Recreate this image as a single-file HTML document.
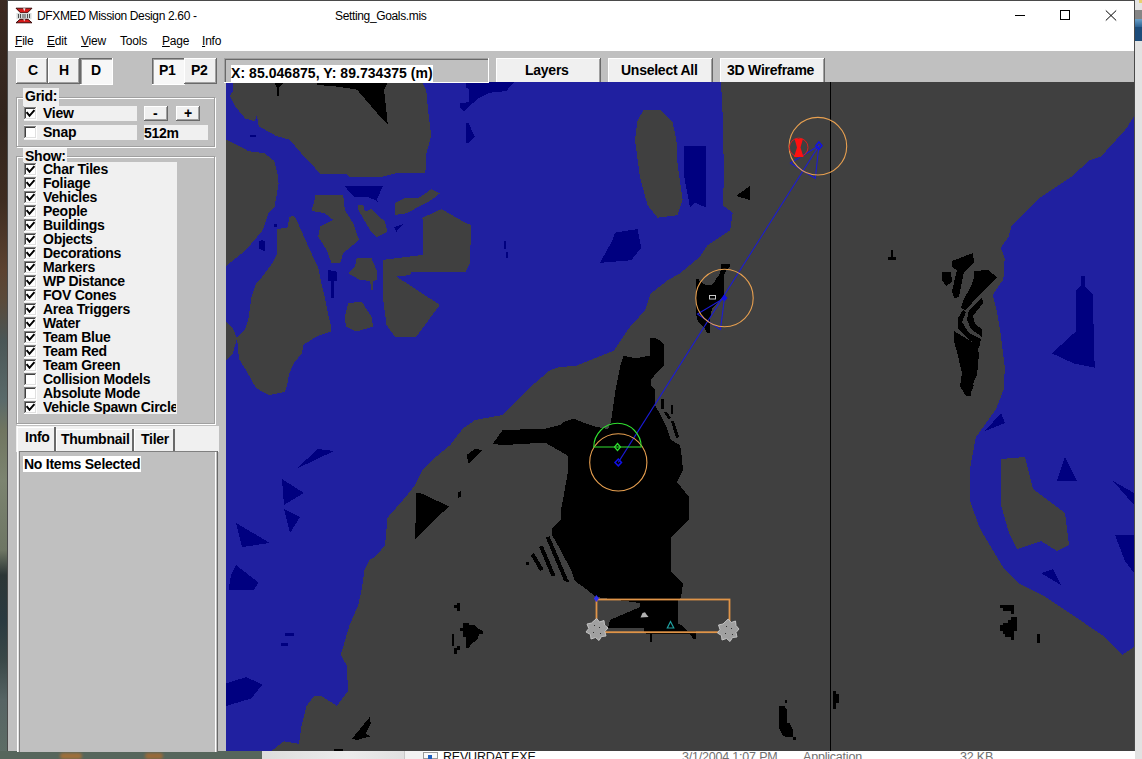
<!DOCTYPE html>
<html><head><meta charset="utf-8">
<style>
*{margin:0;padding:0;box-sizing:border-box}
html,body{width:1142px;height:759px;overflow:hidden;background:#3a2c22;position:relative;font-family:"Liberation Sans",sans-serif}
.a{position:absolute}
.t{position:absolute;white-space:pre;color:#000}
.ui{font-family:"Liberation Sans",sans-serif;font-weight:bold;font-size:14px;line-height:14px;letter-spacing:-0.25px}
.btn{position:absolute;background:#f0f0f0;border-top:1px solid #fff;border-left:1px solid #fff;border-right:1px solid #696969;border-bottom:1px solid #696969;box-shadow:inset -1px -1px 0 #a0a0a0}
.btnp{position:absolute;background:#f4f4f4;border-top:1px solid #696969;border-left:1px solid #696969;border-right:1px solid #fff;border-bottom:1px solid #fff;box-shadow:inset 1px 1px 0 #a0a0a0}
.cb{position:absolute;width:12px;height:12px;background:#fff;border-top:1px solid #808080;border-left:1px solid #808080;border-right:1px solid #f0f0f0;border-bottom:1px solid #f0f0f0;box-shadow:inset 1px 1px 0 #696969}
.lab{position:absolute;background:#f0f0f0}
u{text-decoration-thickness:1px;text-underline-offset:1px}
</style></head><body>
<!-- desktop left strip -->
<div class="a" style="left:0;top:0;width:8px;height:759px;background:linear-gradient(#3a2a22 0px,#32241c 120px,#3e2c20 200px,#5c4230 270px,#5a4a3a 300px,#4a5656 340px,#5a6a6a 400px,#707560 430px,#7c8470 480px,#6e7664 550px,#2c3636 575px,#2a3a40 620px,#3a4848 660px,#566464 700px,#5e6e66 759px)"></div>
<!-- bottom strip -->
<div class="a" style="left:0;top:751px;width:262px;height:8px;background:#56665c"></div>
<div class="a" style="left:262px;top:751px;width:142px;height:8px;background:linear-gradient(90deg,#dcdcdc,#ececec 60%,#e0e0e0)"></div>
<div class="a" style="left:60px;top:753px;width:22px;height:6px;background:#a0703a;border-radius:4px;filter:blur(1.5px)"></div>
<div class="a" style="left:145px;top:753px;width:18px;height:6px;background:#9a6a38;border-radius:4px;filter:blur(1.5px)"></div>
<div class="a" style="left:404px;top:751px;width:738px;height:8px;background:#fff"></div>
<div class="a" style="left:404px;top:751px;width:1px;height:8px;background:#c8c8c8"></div>
<div class="a" style="left:405px;top:751px;width:18px;height:8px;background:#f2f2f2"></div>
<div class="a" style="left:423px;top:752px;width:15px;height:7px;border:1px solid #9a9a9a;background:#fafafa"></div>
<div class="a" style="left:428px;top:755px;width:4px;height:4px;background:#2060c0"></div>
<div class="t" style="left:443px;top:750px;font-size:12.5px;letter-spacing:-0.2px;color:#101010">REVURDAT.EXE</div>
<div class="t" style="left:682px;top:750px;font-size:12.5px;letter-spacing:-0.2px;color:#707070">3/1/2004 1:07 PM</div>
<div class="t" style="left:803px;top:750px;font-size:12.5px;letter-spacing:-0.2px;color:#707070">Application</div>
<div class="t" style="left:960px;top:750px;font-size:12.5px;letter-spacing:-0.2px;color:#707070">32 KB</div>
<!-- right strip -->
<div class="a" style="left:1135px;top:0;width:7px;height:759px;background:#e4e4e4"></div>
<div class="a" style="left:1139px;top:0;width:3px;height:3px;background:#e8d070"></div>
<div class="a" style="left:1135px;top:10px;width:7px;height:9px;background:#858585"></div>
<div class="a" style="left:1135px;top:19px;width:7px;height:8px;background:linear-gradient(#6aa0c8,#2a6090)"></div>
<div class="a" style="left:1135px;top:27px;width:7px;height:14px;background:#1c4c7a"></div>
<div class="a" style="left:1135px;top:41px;width:7px;height:718px;background:#e2e2e2"></div>
<!-- window -->
<div class="a" style="left:7px;top:0;width:1128px;height:751px;background:#c0c0c0;border:1px solid #4a4a4a;border-bottom:none"></div>
<div class="a" style="left:8px;top:1px;width:1126px;height:50px;background:#fff"></div>
<svg class="a" style="left:15px;top:7px" width="18" height="17"><path d="M1 1.2H17L12.5 5.8H5.5Z" fill="#d41a1a" stroke="#2a0000" stroke-width="0.9"/><path d="M8 1.2L10.5 1.2L9.3 4.5Z" fill="#e8e8e8"/><rect x="1.5" y="6" width="15" height="6.2" fill="#d8dcdc"/><path d="M3.5 7v4M5.5 7v4M8 7v4M10 7v4M12.5 7v4M14.5 7v4" stroke="#505050" stroke-width="1"/><path d="M5 12.3H13L17 15.8H1Z" fill="#d41a1a" stroke="#2a0000" stroke-width="0.9"/><path d="M8.2 12.3L10.3 12.3L9.3 14.5Z" fill="#e8e8e8"/></svg>
<!-- title -->
<div class="t" style="left:37px;top:9px;font-size:12px;letter-spacing:-0.35px;color:#000">DFXMED Mission Design 2.60 -</div>
<div class="t" style="left:335px;top:9px;font-size:12px;letter-spacing:-0.35px;color:#000">Setting_Goals.mis</div>
<!-- window controls -->
<div class="a" style="left:1015px;top:15px;width:10px;height:1px;background:#000"></div>
<div class="a" style="left:1060px;top:10px;width:10px;height:10px;border:1px solid #000"></div>
<svg class="a" style="left:1104px;top:9px" width="14" height="13"><path d="M1.8 1.5L12.2 11.5M12.2 1.5L1.8 11.5" stroke="#000" stroke-width="1"/></svg>
<!-- menu -->
<div class="t" style="left:15px;top:34px;font-size:12px;letter-spacing:-0.2px"><u>F</u>ile</div>
<div class="t" style="left:47px;top:34px;font-size:12px;letter-spacing:-0.2px"><u>E</u>dit</div>
<div class="t" style="left:81px;top:34px;font-size:12px;letter-spacing:-0.2px"><u>V</u>iew</div>
<div class="t" style="left:120px;top:34px;font-size:12px;letter-spacing:-0.2px">Tools</div>
<div class="t" style="left:162px;top:34px;font-size:12px;letter-spacing:-0.2px"><u>P</u>age</div>
<div class="t" style="left:202px;top:34px;font-size:12px;letter-spacing:-0.2px"><u>I</u>nfo</div>

<!-- toolbar buttons -->
<div class="a" style="left:16px;top:58px;width:32px;height:26px;background:#696969"></div><div class="a" style="left:16px;top:58px;width:31px;height:25px;background:#fff"></div><div class="a" style="left:17px;top:59px;width:30px;height:24px;background:#a0a0a0"></div><div class="a" style="left:17px;top:59px;width:29px;height:23px;background:#f0f0f0"></div>
<div class="t ui" style="left:28px;top:63px;">C</div>
<div class="a" style="left:48px;top:58px;width:32px;height:26px;background:#696969"></div><div class="a" style="left:48px;top:58px;width:31px;height:25px;background:#fff"></div><div class="a" style="left:49px;top:59px;width:30px;height:24px;background:#a0a0a0"></div><div class="a" style="left:49px;top:59px;width:29px;height:23px;background:#f0f0f0"></div>
<div class="t ui" style="left:59px;top:63px;">H</div>
<div class="a" style="left:80px;top:58px;width:33px;height:27px;background:#fff"></div><div class="a" style="left:80px;top:58px;width:32px;height:26px;background:#696969"></div><div class="a" style="left:81px;top:59px;width:31px;height:25px;background:#a0a0a0"></div><div class="a" style="left:82px;top:60px;width:30px;height:24px;background:#f7f7f7"></div>
<div class="t ui" style="left:91px;top:63px;">D</div>
<div class="a" style="left:152px;top:58px;width:33px;height:27px;background:#fff"></div><div class="a" style="left:152px;top:58px;width:32px;height:26px;background:#696969"></div><div class="a" style="left:153px;top:59px;width:31px;height:25px;background:#a0a0a0"></div><div class="a" style="left:154px;top:60px;width:30px;height:24px;background:#f7f7f7"></div>
<div class="t ui" style="left:159px;top:63px;">P1</div>
<div class="a" style="left:184px;top:58px;width:33px;height:26px;background:#696969"></div><div class="a" style="left:184px;top:58px;width:32px;height:25px;background:#fff"></div><div class="a" style="left:185px;top:59px;width:31px;height:24px;background:#a0a0a0"></div><div class="a" style="left:185px;top:59px;width:30px;height:23px;background:#f0f0f0"></div>
<div class="t ui" style="left:191px;top:63px;">P2</div>
<div class="a" style="left:224px;top:58px;width:265px;height:25px;background:#fff"></div>
<div class="a" style="left:224px;top:58px;width:264px;height:24px;background:#a0a0a0"></div>
<div class="a" style="left:225px;top:59px;width:263px;height:23px;background:#696969"></div>
<div class="a" style="left:226px;top:60px;width:262px;height:22px;background:#c0c0c0"></div>
<div class="a" style="left:231px;top:65px;width:202px;height:17px;background:#fff"></div>
<div class="t ui" style="left:231px;top:66px;letter-spacing:0.05px">X: 85.046875, Y: 89.734375 (m)</div>
<div class="a" style="left:496px;top:58px;width:105px;height:26px;background:#696969"></div><div class="a" style="left:496px;top:58px;width:104px;height:25px;background:#fff"></div><div class="a" style="left:497px;top:59px;width:103px;height:24px;background:#a0a0a0"></div><div class="a" style="left:497px;top:59px;width:102px;height:23px;background:#f0f0f0"></div>
<div class="t ui" style="left:525px;top:63px;">Layers</div>
<div class="a" style="left:608px;top:58px;width:105px;height:26px;background:#696969"></div><div class="a" style="left:608px;top:58px;width:104px;height:25px;background:#fff"></div><div class="a" style="left:609px;top:59px;width:103px;height:24px;background:#a0a0a0"></div><div class="a" style="left:609px;top:59px;width:102px;height:23px;background:#f0f0f0"></div>
<div class="t ui" style="left:621px;top:63px;">Unselect All</div>
<div class="a" style="left:720px;top:58px;width:105px;height:26px;background:#696969"></div><div class="a" style="left:720px;top:58px;width:104px;height:25px;background:#fff"></div><div class="a" style="left:721px;top:59px;width:103px;height:24px;background:#a0a0a0"></div><div class="a" style="left:721px;top:59px;width:102px;height:23px;background:#f0f0f0"></div>
<div class="t ui" style="left:727px;top:63px;">3D Wireframe</div>
<!-- LEFT PANEL -->
<div class="a" style="left:17px;top:98px;width:199px;height:50px;border:1px solid #fff"></div><div class="a" style="left:16px;top:97px;width:199px;height:50px;border:1px solid #a0a0a0"></div>
<div class="a" style="left:23px;top:88px;width:36px;height:18px;background:#f0f0f0"></div>
<div class="t ui" style="left:25px;top:89px;">Grid:</div>
<div class="a" style="left:24px;top:106px;width:113px;height:15px;background:#f0f0f0"></div>
<div class="a" style="left:24px;top:107px;width:13px;height:13px;background:#fff"></div><div class="a" style="left:24px;top:107px;width:12px;height:12px;background:#808080"></div><div class="a" style="left:25px;top:108px;width:11px;height:11px;background:#e0e0e0"></div><div class="a" style="left:25px;top:108px;width:10px;height:10px;background:#404040"></div><div class="a" style="left:26px;top:109px;width:9px;height:9px;background:#fff"></div><div class="a" style="left:24px;top:107px;width:13px;height:13px"><svg class="a" style="left:0;top:0" width="13" height="13"><path d="M3.2 6L5.5 8.8L9.8 3.8" stroke="#000" stroke-width="2" fill="none" stroke-linecap="square"/></svg></div>
<div class="t ui" style="left:43px;top:106px;">View</div>
<div class="a" style="left:24px;top:125px;width:113px;height:15px;background:#f0f0f0"></div>
<div class="a" style="left:24px;top:126px;width:13px;height:13px;background:#fff"></div><div class="a" style="left:24px;top:126px;width:12px;height:12px;background:#808080"></div><div class="a" style="left:25px;top:127px;width:11px;height:11px;background:#e0e0e0"></div><div class="a" style="left:25px;top:127px;width:10px;height:10px;background:#404040"></div><div class="a" style="left:26px;top:128px;width:9px;height:9px;background:#fff"></div>
<div class="t ui" style="left:43px;top:125px;">Snap</div>
<div class="a" style="left:144px;top:106px;width:24px;height:15px;background:#696969"></div><div class="a" style="left:144px;top:106px;width:23px;height:14px;background:#fff"></div><div class="a" style="left:145px;top:107px;width:22px;height:13px;background:#a0a0a0"></div><div class="a" style="left:145px;top:107px;width:21px;height:12px;background:#f0f0f0"></div>
<div class="t ui" style="left:153px;top:106px;">-</div>
<div class="a" style="left:176px;top:106px;width:24px;height:15px;background:#696969"></div><div class="a" style="left:176px;top:106px;width:23px;height:14px;background:#fff"></div><div class="a" style="left:177px;top:107px;width:22px;height:13px;background:#a0a0a0"></div><div class="a" style="left:177px;top:107px;width:21px;height:12px;background:#f0f0f0"></div>
<div class="t ui" style="left:184px;top:106px;">+</div>
<div class="a" style="left:144px;top:125px;width:64px;height:15px;background:#f0f0f0"></div>
<div class="t ui" style="left:144px;top:126px;">512m</div>
<div class="a" style="left:17px;top:157px;width:199px;height:268px;border:1px solid #fff"></div><div class="a" style="left:16px;top:156px;width:199px;height:268px;border:1px solid #a0a0a0"></div>
<div class="a" style="left:23px;top:148px;width:44px;height:14px;background:#f0f0f0"></div>
<div class="t ui" style="left:25px;top:149px;">Show:</div>
<div class="a" style="left:24px;top:162px;width:153px;height:252px;background:#f0f0f0"></div>
<div class="a" style="left:24px;top:163px;width:13px;height:13px;background:#fff"></div><div class="a" style="left:24px;top:163px;width:12px;height:12px;background:#808080"></div><div class="a" style="left:25px;top:164px;width:11px;height:11px;background:#e0e0e0"></div><div class="a" style="left:25px;top:164px;width:10px;height:10px;background:#404040"></div><div class="a" style="left:26px;top:165px;width:9px;height:9px;background:#fff"></div><div class="a" style="left:24px;top:163px;width:13px;height:13px"><svg class="a" style="left:0;top:0" width="13" height="13"><path d="M3.2 6L5.5 8.8L9.8 3.8" stroke="#000" stroke-width="2" fill="none" stroke-linecap="square"/></svg></div>
<div class="t ui" style="left:43px;top:162px;">Char Tiles</div>
<div class="a" style="left:24px;top:177px;width:13px;height:13px;background:#fff"></div><div class="a" style="left:24px;top:177px;width:12px;height:12px;background:#808080"></div><div class="a" style="left:25px;top:178px;width:11px;height:11px;background:#e0e0e0"></div><div class="a" style="left:25px;top:178px;width:10px;height:10px;background:#404040"></div><div class="a" style="left:26px;top:179px;width:9px;height:9px;background:#fff"></div><div class="a" style="left:24px;top:177px;width:13px;height:13px"><svg class="a" style="left:0;top:0" width="13" height="13"><path d="M3.2 6L5.5 8.8L9.8 3.8" stroke="#000" stroke-width="2" fill="none" stroke-linecap="square"/></svg></div>
<div class="t ui" style="left:43px;top:176px;">Foliage</div>
<div class="a" style="left:24px;top:191px;width:13px;height:13px;background:#fff"></div><div class="a" style="left:24px;top:191px;width:12px;height:12px;background:#808080"></div><div class="a" style="left:25px;top:192px;width:11px;height:11px;background:#e0e0e0"></div><div class="a" style="left:25px;top:192px;width:10px;height:10px;background:#404040"></div><div class="a" style="left:26px;top:193px;width:9px;height:9px;background:#fff"></div><div class="a" style="left:24px;top:191px;width:13px;height:13px"><svg class="a" style="left:0;top:0" width="13" height="13"><path d="M3.2 6L5.5 8.8L9.8 3.8" stroke="#000" stroke-width="2" fill="none" stroke-linecap="square"/></svg></div>
<div class="t ui" style="left:43px;top:190px;">Vehicles</div>
<div class="a" style="left:24px;top:205px;width:13px;height:13px;background:#fff"></div><div class="a" style="left:24px;top:205px;width:12px;height:12px;background:#808080"></div><div class="a" style="left:25px;top:206px;width:11px;height:11px;background:#e0e0e0"></div><div class="a" style="left:25px;top:206px;width:10px;height:10px;background:#404040"></div><div class="a" style="left:26px;top:207px;width:9px;height:9px;background:#fff"></div><div class="a" style="left:24px;top:205px;width:13px;height:13px"><svg class="a" style="left:0;top:0" width="13" height="13"><path d="M3.2 6L5.5 8.8L9.8 3.8" stroke="#000" stroke-width="2" fill="none" stroke-linecap="square"/></svg></div>
<div class="t ui" style="left:43px;top:204px;">People</div>
<div class="a" style="left:24px;top:219px;width:13px;height:13px;background:#fff"></div><div class="a" style="left:24px;top:219px;width:12px;height:12px;background:#808080"></div><div class="a" style="left:25px;top:220px;width:11px;height:11px;background:#e0e0e0"></div><div class="a" style="left:25px;top:220px;width:10px;height:10px;background:#404040"></div><div class="a" style="left:26px;top:221px;width:9px;height:9px;background:#fff"></div><div class="a" style="left:24px;top:219px;width:13px;height:13px"><svg class="a" style="left:0;top:0" width="13" height="13"><path d="M3.2 6L5.5 8.8L9.8 3.8" stroke="#000" stroke-width="2" fill="none" stroke-linecap="square"/></svg></div>
<div class="t ui" style="left:43px;top:218px;">Buildings</div>
<div class="a" style="left:24px;top:233px;width:13px;height:13px;background:#fff"></div><div class="a" style="left:24px;top:233px;width:12px;height:12px;background:#808080"></div><div class="a" style="left:25px;top:234px;width:11px;height:11px;background:#e0e0e0"></div><div class="a" style="left:25px;top:234px;width:10px;height:10px;background:#404040"></div><div class="a" style="left:26px;top:235px;width:9px;height:9px;background:#fff"></div><div class="a" style="left:24px;top:233px;width:13px;height:13px"><svg class="a" style="left:0;top:0" width="13" height="13"><path d="M3.2 6L5.5 8.8L9.8 3.8" stroke="#000" stroke-width="2" fill="none" stroke-linecap="square"/></svg></div>
<div class="t ui" style="left:43px;top:232px;">Objects</div>
<div class="a" style="left:24px;top:247px;width:13px;height:13px;background:#fff"></div><div class="a" style="left:24px;top:247px;width:12px;height:12px;background:#808080"></div><div class="a" style="left:25px;top:248px;width:11px;height:11px;background:#e0e0e0"></div><div class="a" style="left:25px;top:248px;width:10px;height:10px;background:#404040"></div><div class="a" style="left:26px;top:249px;width:9px;height:9px;background:#fff"></div><div class="a" style="left:24px;top:247px;width:13px;height:13px"><svg class="a" style="left:0;top:0" width="13" height="13"><path d="M3.2 6L5.5 8.8L9.8 3.8" stroke="#000" stroke-width="2" fill="none" stroke-linecap="square"/></svg></div>
<div class="t ui" style="left:43px;top:246px;">Decorations</div>
<div class="a" style="left:24px;top:261px;width:13px;height:13px;background:#fff"></div><div class="a" style="left:24px;top:261px;width:12px;height:12px;background:#808080"></div><div class="a" style="left:25px;top:262px;width:11px;height:11px;background:#e0e0e0"></div><div class="a" style="left:25px;top:262px;width:10px;height:10px;background:#404040"></div><div class="a" style="left:26px;top:263px;width:9px;height:9px;background:#fff"></div><div class="a" style="left:24px;top:261px;width:13px;height:13px"><svg class="a" style="left:0;top:0" width="13" height="13"><path d="M3.2 6L5.5 8.8L9.8 3.8" stroke="#000" stroke-width="2" fill="none" stroke-linecap="square"/></svg></div>
<div class="t ui" style="left:43px;top:260px;">Markers</div>
<div class="a" style="left:24px;top:275px;width:13px;height:13px;background:#fff"></div><div class="a" style="left:24px;top:275px;width:12px;height:12px;background:#808080"></div><div class="a" style="left:25px;top:276px;width:11px;height:11px;background:#e0e0e0"></div><div class="a" style="left:25px;top:276px;width:10px;height:10px;background:#404040"></div><div class="a" style="left:26px;top:277px;width:9px;height:9px;background:#fff"></div><div class="a" style="left:24px;top:275px;width:13px;height:13px"><svg class="a" style="left:0;top:0" width="13" height="13"><path d="M3.2 6L5.5 8.8L9.8 3.8" stroke="#000" stroke-width="2" fill="none" stroke-linecap="square"/></svg></div>
<div class="t ui" style="left:43px;top:274px;">WP Distance</div>
<div class="a" style="left:24px;top:289px;width:13px;height:13px;background:#fff"></div><div class="a" style="left:24px;top:289px;width:12px;height:12px;background:#808080"></div><div class="a" style="left:25px;top:290px;width:11px;height:11px;background:#e0e0e0"></div><div class="a" style="left:25px;top:290px;width:10px;height:10px;background:#404040"></div><div class="a" style="left:26px;top:291px;width:9px;height:9px;background:#fff"></div><div class="a" style="left:24px;top:289px;width:13px;height:13px"><svg class="a" style="left:0;top:0" width="13" height="13"><path d="M3.2 6L5.5 8.8L9.8 3.8" stroke="#000" stroke-width="2" fill="none" stroke-linecap="square"/></svg></div>
<div class="t ui" style="left:43px;top:288px;">FOV Cones</div>
<div class="a" style="left:24px;top:303px;width:13px;height:13px;background:#fff"></div><div class="a" style="left:24px;top:303px;width:12px;height:12px;background:#808080"></div><div class="a" style="left:25px;top:304px;width:11px;height:11px;background:#e0e0e0"></div><div class="a" style="left:25px;top:304px;width:10px;height:10px;background:#404040"></div><div class="a" style="left:26px;top:305px;width:9px;height:9px;background:#fff"></div><div class="a" style="left:24px;top:303px;width:13px;height:13px"><svg class="a" style="left:0;top:0" width="13" height="13"><path d="M3.2 6L5.5 8.8L9.8 3.8" stroke="#000" stroke-width="2" fill="none" stroke-linecap="square"/></svg></div>
<div class="t ui" style="left:43px;top:302px;">Area Triggers</div>
<div class="a" style="left:24px;top:317px;width:13px;height:13px;background:#fff"></div><div class="a" style="left:24px;top:317px;width:12px;height:12px;background:#808080"></div><div class="a" style="left:25px;top:318px;width:11px;height:11px;background:#e0e0e0"></div><div class="a" style="left:25px;top:318px;width:10px;height:10px;background:#404040"></div><div class="a" style="left:26px;top:319px;width:9px;height:9px;background:#fff"></div><div class="a" style="left:24px;top:317px;width:13px;height:13px"><svg class="a" style="left:0;top:0" width="13" height="13"><path d="M3.2 6L5.5 8.8L9.8 3.8" stroke="#000" stroke-width="2" fill="none" stroke-linecap="square"/></svg></div>
<div class="t ui" style="left:43px;top:316px;">Water</div>
<div class="a" style="left:24px;top:331px;width:13px;height:13px;background:#fff"></div><div class="a" style="left:24px;top:331px;width:12px;height:12px;background:#808080"></div><div class="a" style="left:25px;top:332px;width:11px;height:11px;background:#e0e0e0"></div><div class="a" style="left:25px;top:332px;width:10px;height:10px;background:#404040"></div><div class="a" style="left:26px;top:333px;width:9px;height:9px;background:#fff"></div><div class="a" style="left:24px;top:331px;width:13px;height:13px"><svg class="a" style="left:0;top:0" width="13" height="13"><path d="M3.2 6L5.5 8.8L9.8 3.8" stroke="#000" stroke-width="2" fill="none" stroke-linecap="square"/></svg></div>
<div class="t ui" style="left:43px;top:330px;">Team Blue</div>
<div class="a" style="left:24px;top:345px;width:13px;height:13px;background:#fff"></div><div class="a" style="left:24px;top:345px;width:12px;height:12px;background:#808080"></div><div class="a" style="left:25px;top:346px;width:11px;height:11px;background:#e0e0e0"></div><div class="a" style="left:25px;top:346px;width:10px;height:10px;background:#404040"></div><div class="a" style="left:26px;top:347px;width:9px;height:9px;background:#fff"></div><div class="a" style="left:24px;top:345px;width:13px;height:13px"><svg class="a" style="left:0;top:0" width="13" height="13"><path d="M3.2 6L5.5 8.8L9.8 3.8" stroke="#000" stroke-width="2" fill="none" stroke-linecap="square"/></svg></div>
<div class="t ui" style="left:43px;top:344px;">Team Red</div>
<div class="a" style="left:24px;top:359px;width:13px;height:13px;background:#fff"></div><div class="a" style="left:24px;top:359px;width:12px;height:12px;background:#808080"></div><div class="a" style="left:25px;top:360px;width:11px;height:11px;background:#e0e0e0"></div><div class="a" style="left:25px;top:360px;width:10px;height:10px;background:#404040"></div><div class="a" style="left:26px;top:361px;width:9px;height:9px;background:#fff"></div><div class="a" style="left:24px;top:359px;width:13px;height:13px"><svg class="a" style="left:0;top:0" width="13" height="13"><path d="M3.2 6L5.5 8.8L9.8 3.8" stroke="#000" stroke-width="2" fill="none" stroke-linecap="square"/></svg></div>
<div class="t ui" style="left:43px;top:358px;">Team Green</div>
<div class="a" style="left:24px;top:373px;width:13px;height:13px;background:#fff"></div><div class="a" style="left:24px;top:373px;width:12px;height:12px;background:#808080"></div><div class="a" style="left:25px;top:374px;width:11px;height:11px;background:#e0e0e0"></div><div class="a" style="left:25px;top:374px;width:10px;height:10px;background:#404040"></div><div class="a" style="left:26px;top:375px;width:9px;height:9px;background:#fff"></div>
<div class="t ui" style="left:43px;top:372px;">Collision Models</div>
<div class="a" style="left:24px;top:387px;width:13px;height:13px;background:#fff"></div><div class="a" style="left:24px;top:387px;width:12px;height:12px;background:#808080"></div><div class="a" style="left:25px;top:388px;width:11px;height:11px;background:#e0e0e0"></div><div class="a" style="left:25px;top:388px;width:10px;height:10px;background:#404040"></div><div class="a" style="left:26px;top:389px;width:9px;height:9px;background:#fff"></div>
<div class="t ui" style="left:43px;top:386px;">Absolute Mode</div>
<div class="a" style="left:24px;top:401px;width:13px;height:13px;background:#fff"></div><div class="a" style="left:24px;top:401px;width:12px;height:12px;background:#808080"></div><div class="a" style="left:25px;top:402px;width:11px;height:11px;background:#e0e0e0"></div><div class="a" style="left:25px;top:402px;width:10px;height:10px;background:#404040"></div><div class="a" style="left:26px;top:403px;width:9px;height:9px;background:#fff"></div><div class="a" style="left:24px;top:401px;width:13px;height:13px"><svg class="a" style="left:0;top:0" width="13" height="13"><path d="M3.2 6L5.5 8.8L9.8 3.8" stroke="#000" stroke-width="2" fill="none" stroke-linecap="square"/></svg></div>
<div class="t ui" style="left:43px;top:400px;width:133px;overflow:hidden">Vehicle Spawn Circle</div>
<div class="a" style="left:16px;top:426px;width:203px;height:26px;background:#f0f0f0"></div>
<div class="a" style="left:17px;top:426px;width:1px;height:26px;background:#fff"></div>
<div class="a" style="left:17px;top:427px;width:38px;height:1px;background:#fff"></div>
<div class="a" style="left:54px;top:427px;width:2px;height:25px;background:#696969"></div>
<div class="t ui" style="left:25px;top:430px;">Info</div>
<div class="a" style="left:56px;top:429px;width:77px;height:1px;background:#fff"></div>
<div class="a" style="left:56px;top:429px;width:1px;height:22px;background:#fff"></div>
<div class="a" style="left:132px;top:429px;width:2px;height:22px;background:#696969"></div>
<div class="t ui" style="left:61px;top:432px;">Thumbnail</div>
<div class="a" style="left:134px;top:429px;width:40px;height:1px;background:#fff"></div>
<div class="a" style="left:134px;top:429px;width:1px;height:22px;background:#fff"></div>
<div class="a" style="left:173px;top:429px;width:2px;height:22px;background:#696969"></div>
<div class="t ui" style="left:141px;top:432px;">Tiler</div>
<div class="a" style="left:17px;top:451px;width:201px;height:301px;background:#c0c0c0"></div>
<div class="a" style="left:17px;top:451px;width:1px;height:301px;background:#fff"></div>
<div class="a" style="left:18px;top:451px;width:1px;height:301px;background:#e0e0e0"></div>
<div class="a" style="left:19px;top:451px;width:198px;height:1px;background:#808080"></div>
<div class="a" style="left:19px;top:451px;width:1px;height:301px;background:#808080"></div>
<div class="a" style="left:215px;top:452px;width:1px;height:300px;background:#fff"></div>
<div class="a" style="left:217px;top:451px;width:1px;height:301px;background:#696969"></div>
<div class="a" style="left:23px;top:456px;width:118px;height:16px;background:#fff"></div>
<div class="t ui" style="left:24px;top:457px;">No Items Selected</div>
<!-- MAP -->
<!--MAPSTART--><svg class="a" style="left:226px;top:82px" width="908" height="669" viewBox="226 82 908 669" shape-rendering="crispEdges">
<rect x="226" y="82" width="908" height="669" fill="#2020a0"/>
<polygon fill="#404040" points="232.7,82 232.7,91.6 229.9,95.4 235.6,107 245.3,118.5 254.9,121.4 256.8,115.6 258.8,126.2 276.1,135.9 289.6,139.7 301.1,153.2 308.9,160.9 320.4,174.4 347.4,174.4 349.3,177.3 380.1,177.3 399.4,172.5 425.4,172.5 426.4,153.2 431.2,135.9 428.3,112.8 426.4,91.6 422.5,82"/>
<polygon fill="#404040" points="226,139.7 237.6,145.5 249.1,151.3 264.5,153.2 274.2,160.9 278,176.3 279,190 278.7,182.7 276,198.5 274.7,206.4 268,214 262.9,230 246,250 226,266"/>
<polygon fill="#404040" points="277.4,229.1 287.6,227.4 289.4,217.1 292.8,215.4 296.2,218.8 301.3,230.8 308.2,246.2 318.5,268.5 321.9,285.6 325,298.3 328.3,314.9 330.8,324.9 330.8,331.5 316.6,336.5 303.3,344.8 302,353 294,363 289,374 287,386 285,392 269,395 263,392 256,388 251,379 246,370 239,359 237,338 242,332 244.8,330 248.3,319.9 251.7,295.9 256,283.9 262,277 272.2,263.4 277.4,253.1"/>
<polygon fill="#404040" points="643.8,110 660,110 672.6,122.5 676.4,140 677.6,165 682.6,200 677.6,215.2 657.6,217.7 647.6,205.2 640,177.6 635,140 637.6,120"/>
<polygon fill="#404040" points="226,321 233,329 237,338 233,353 226,361"/>
<polygon fill="#404040" points="315,195 343.2,195 344.9,210 353.2,223.3 359,239.9 343.2,253.2 340,263.3 331.6,263.3 326.6,249.9 318.3,236.6 320,226.6 333.3,220 325,213.3 311.6,210.8 315,198.3"/>
<polygon fill="#404040" points="358.2,205 363.2,205 364.9,211.6 371.5,209.1 384.8,221.6 387.3,231.6 376.5,237.4 369.9,229.9 363.2,218.3 357.4,208.3"/>
<polygon fill="#404040" points="394.8,203.3 404.8,198.3 418.1,198.3 431.4,189.2 439.8,193.3 431.4,200 406.5,213.3 394.8,214.9"/>
<polygon fill="#404040" points="356.6,258.3 371.5,258.3 376.5,270 376.5,280 373.2,281.6 373.2,290 371.5,290 369.9,280.8 359.9,280 348.3,273.3 354.9,266.6"/>
<polygon fill="#404040" points="348.3,303.2 361.6,301.6 371.5,316.6 373.2,326.5 356.6,331.5 345.8,326.5 344.9,316.6"/>
<polygon fill="#404040" points="421.4,218.3 441.4,209.1 466.4,223.3 471.4,224.9 469.7,263.2 465.6,271.6 411.5,271.6 409.8,275 396.5,276.6 439.8,304.9 416.5,336.5 394.8,336.5 386.5,324.9 383.2,299.9 383.2,259.9 423.1,254.9 423.1,219.9"/>
<polygon fill="#404040" points="1134,82 721,82 722.7,115 724,177.6 722.7,205.2 732.7,212.7 730.2,230.2 707.7,245.2 700,256.6 680.2,273.2 667.3,280.6 650.7,293.5 645.2,310.1 628.6,328.6 613.8,350.7 595.4,358.1 576.9,365.5 558.5,367.3 550.2,370 532.7,385 517.7,400 502.7,415 475.1,420 462.6,428.8 450.1,445.1 435.1,457.6 422.6,470.1 415.1,485.1 405,497.7 387.5,517.7 385,545.2 375,557 369.5,560 364.5,570 362,587.7 358.2,605.3 349.4,625.5 344.3,643.1 340.6,654.4 346.8,665.7 348.1,690.9 336.8,706 321.7,696 314.1,696 306.6,706 301.5,726.2 299,743.8 283.9,741.3 271.3,751 1134,751"/>
<polygon fill="#2020a0" points="1134,116.5 1125.9,129 1100.9,156.7 1089,160.6 1071.9,176.4 1040.3,197.5 1011.3,226.5 1008.6,237 1000.7,247.6 1004.7,258.1 1003.4,279.2 992.8,295 996.7,310.5 1000.8,335 1004.9,367.7 1003.5,390 995.6,409.8 975.8,437.4 969.9,469 969.9,500.7 979.8,528.3 1003.5,567.9 1019.3,583.7 1043,595.5 1078.6,619.2 1102.3,635.1 1122.1,654.8 1134,646.9"/>
<polygon fill="#404040" points="1001,459 1025,457 1033,489 1065,513 1069,545 1057,551 1041,541 1017,549 1009,533 1001,505"/>
<polygon fill="#000080" points="344.9,185.8 383.2,185.8 376.5,200 379.9,203.3 374.9,200 366.5,196.6 356.6,196.6 354.9,197.5 348.2,190.8"/>
<polygon fill="#000080" points="394,227.4 403,224 396.5,231.6"/>
<polygon fill="#000080" points="503.5,241 506,241 506,249 503.5,249"/>
<polygon fill="#000080" points="506,252 508,252 508,258 506,258"/>
<polygon fill="#000080" points="250,134.6 255.5,134.6 255.5,137.4 250,137.4"/>
<polygon fill="#000080" points="259.4,241.1 262,240 265.4,241.5 265.4,251.4 259.4,249"/>
<polygon fill="#000080" points="274,224 277.4,224 277.4,227.4 274,227.4"/>
<polygon fill="#000080" points="328.3,270 336.6,271.6 336.6,280.8 334.1,280.8 334.1,298.3 330.8,298.3 330.8,280.8 328.3,280.8"/>
<polygon fill="#000080" points="615,232.7 637.6,229 641.3,247.7 631.3,260.2 600,262.8 612.5,240.2"/>
<polygon fill="#000080" points="465.7,82 514.8,82 505.9,91.2 489.5,92.7 479.1,97.9 470.2,105.3 464.2,111.3 459.8,106.8 459.8,103 468.7,102.3 468.7,88.9 465.7,87.4"/>
<polygon fill="#000080" points="465.7,123.2 468.7,123.2 474.7,136.6 468.7,142.5 465.7,142.5"/>
<polygon fill="#000080" points="683.9,146.3 706.4,146.3 706.4,207.7 695.1,202.7 690.1,207.7 683.9,175.1"/>
<polygon fill="#000080" points="1080.5,275.8 1084.5,275.8 1084.5,286 1092.7,294.2 1094.7,367.7 1074.3,363.6 1051.9,353.4 1076.4,330.9 1076.4,290.1 1080.5,286"/>
<polygon fill="#000080" points="296,469 318,449 334,451"/>
<polygon fill="#000080" points="282,479 304,493 284,505"/>
<polygon fill="#000080" points="284,509 300,517 290,533"/>
<polygon fill="#000080" points="236,523 270,543 242,547"/>
<polygon fill="#000080" points="236,565 258.7,582.7 253.7,590.2 228.5,590.2 231,575.1"/>
<polygon fill="#000080" points="284.5,633 293.5,633 293.5,636 284.5,636"/>
<polygon fill="#000080" points="281,643 288,643 288,646 281,646"/>
<polygon fill="#000080" points="226,683.4 246.1,677.1 262.5,684.6 251.2,698.5 226,706"/>
<polygon fill="#000080" points="985,431 1001,413 1005,423"/>
<polygon fill="#000080" points="1057,481 1065,457 1077,481"/>
<polygon fill="#000080" points="1113,481 1134,493 1134,505"/>
<polygon fill="#000080" points="1115,535 1134,535 1134,573 1125,561"/>
<polygon fill="#000080" points="1041,573 1053,569 1061,585"/>
<polygon fill="#000" points="316.6,82 387.8,82 384,89.6 387.8,124.3 380.1,116.6 357,89.6 337.8,86.7 316.6,84.8"/>
<polygon fill="#000" points="274.2,82 284.8,82 279,87.7 279,96.4 277,96.4 277,87.7"/>
<polygon fill="#000" points="650,338 655,338 661,341 664,345 664,366 658,371 651,380 651,386 655,390 655,405 661,416 666,426 671,440 680,445 681,450 683,470 677,482 689,497 689,519 671,537 671,572 683,584 681,598 678,600 678,624 681,625 684,628 687,631 695.5,631.2 696,639.3 693.4,639.3 690,634 655.2,634.2 652.2,634.2 652.2,642.3 650.1,642.3 650.1,634.2 646.6,634.2 644.1,631.2 644,628 608,628 610,620 640,607 640,603 625,601 610,599 596,597 586,589 575,581 572,572 560,549 552,535 552,528 561,519 561,510 564,494 568,471 568,457 565,454 545.2,442.6 502.7,445.1 492.7,443.8 502.7,430 545.2,428.8 560,425 564,422 572,419 575,419 584,423 593,426 602,428 608,429 611,422 612,415 615,393 620,367 623.4,355.7 635.4,358.3 650,355.7"/>
<polygon fill="#000" points="661,399 663.5,399 663.5,409 661,409"/>
<polygon fill="#000" points="670.5,405 672.5,405 672.5,414 670.5,414"/>
<polygon fill="#000" points="664,412 667,412 671,418 668,419"/>
<polygon fill="#000" points="671,421 674,421 679,437 676,438"/>
<polygon fill="#000" points="721,264 730,264 730,266.6 727,269 724.5,273.7 724,295 720,300 713,307 711,313 709.6,323.5 709.6,333 707,333 703.7,327 697.8,321 696,314 696,278.5 697.8,278.5 700.8,282 706.7,285.6 713,284.4 715.6,279.6 720,273.7 721,269"/>
<polygon fill="#000" points="736,196 750,186 750,200"/>
<polygon fill="#000" points="416.3,492.7 422.6,493.9 448.8,506.4 415.1,539"/>
<polygon fill="#000" points="457.6,493 461,491 461,497 457.6,498"/>
<polygon fill="#000" points="466.4,455.1 475.1,448.8 482.6,450.1 468.9,463.9"/>
<polygon fill="#000" points="463,623.2 469,623.2 469,625 475,625 476.9,627.8 482.9,631 482.9,633.8 479.6,634.2 476.9,639.8 471.8,643.5 469,647.6 466.3,647.6 466.3,637 463,637 463,631 460.3,631 460.3,627.8 463,627.8"/>
<polygon fill="#000" points="457,603 460,603 460,611 457,611 457,608 454,608 454,605 457,605"/>
<polygon fill="#000" points="452,634 454,634 454,646 452,646"/>
<polygon fill="#000" points="457,646 460,646 460,650 457,650 457,654 454,654 454,648 457,648"/>
<polygon fill="#000" points="351.9,738.8 369.5,717.4 370.8,723.6 365.7,733.7 370.8,736.2 356.9,740"/>
<polygon fill="#000" points="334,749 343,749 343,751 334,751"/>
<polygon fill="#000" points="999.8,604.8 1014.1,604.8 1014.1,614 1010.9,614 1010.9,610.8 1003,610.8 1003,608 999.8,608"/>
<polygon fill="#000" points="1010.9,617.2 1016.9,617.2 1016.9,630.6 1014.1,630.6 1014.1,639.8 1010.9,639.8 1010.9,637 1005.4,637 1005.4,633.8 1003,633.8 1003,630.6 999.8,630.6 999.8,625.1 1003,625.1 1003,622.7 1008.1,622.7 1008.1,620 1010.9,620"/>
<polygon fill="#000" points="1036.7,633.8 1039.9,633.8 1039.9,643 1036.7,643"/>
<polygon fill="#000" points="779.2,706.3 784.5,706.3 786.7,709.5 786.7,723.4 789.9,723.4 793.1,729.8 793.1,737.2 785.6,737.2 782.4,735.1 779.2,728.7"/>
<polygon fill="#000" points="785,700 787,700 787,703 785,703"/>
<polygon fill="#000" points="793,737 796,737 796,740 793,740"/>
<polygon fill="#000" points="833.1,691.3 835.8,691.3 835.8,694 839,694 839,702.6 835.8,702.6 835.8,709 833.1,709"/>
<polygon fill="#000" points="962,385 974,385 970,395"/>
<polygon fill="#000" points="891,250 893,250 893,257 896,257 896,260 888,260 888,257 891,257"/>
<polygon fill="#000" points="942,272 951,272 952,282 946,286 942,280"/>
<polygon fill="#000" points="952,261 973,253 974,262 964,272 959,297 954,298 952,291 957,270 952,267"/>
<polygon fill="#000" points="974,271 988,270 997,277 983,291 972,303 965,310 961,308 963,301 971,286 974,278"/>
<polygon fill="#000" points="958,318 963,310 966,312 962,322 969,333 981,339 979,348 971,341 958,329"/>
<polygon fill="#000" points="969,310 982,297 983,303 973,316 975,324 982,329 982,337 971,329 967,320"/>
<polygon fill="#000" points="954,331 977,345 979,354 977,375 971,388 971,396 966,396 960,386 962,373 957,352 954,341"/>
<line x1="547.7" y1="537" x2="566" y2="580.3" stroke="#000" stroke-width="4"/>
<line x1="541" y1="546.3" x2="553.5" y2="576" stroke="#000" stroke-width="4"/>
<line x1="532.3" y1="554.2" x2="541.8" y2="570.1" stroke="#000" stroke-width="4"/>
<line x1="527.5" y1="562.2" x2="527.5" y2="565.2" stroke="#000" stroke-width="3"/>
<line x1="567.5" y1="579.5" x2="567.5" y2="582" stroke="#000" stroke-width="3"/>
<rect x="830" y="82" width="1" height="669" fill="#000"/>

<g shape-rendering="auto">
<line x1="618.3" y1="462.4" x2="818.9" y2="145.7" stroke="#1a1ad8" stroke-width="1.05"/>
<path d="M818.9 145.7 L790.4 163 L815.3 178.3 Z" fill="none" stroke="#1a1ad8" stroke-width="1.05"/>
<path d="M724.5 298 L697.4 314 L720.4 329.6 Z" fill="none" stroke="#1a1ad8" stroke-width="1.05"/>
<circle cx="817.9" cy="146.2" r="28.8" fill="none" stroke="#e8a050" stroke-width="1.1"/>
<circle cx="724.5" cy="298" r="28.7" fill="none" stroke="#e8a050" stroke-width="1.1"/>
<circle cx="618.3" cy="462.4" r="28.6" fill="none" stroke="#e8a050" stroke-width="1.1"/>
<path d="M593.8 447 A23.7 23.7 0 0 1 641.2 447 Z" fill="none" stroke="#30e030" stroke-width="1.1"/>
<path d="M617.5 443.5 L620.5 447 L617.5 450.5 L614.5 447 Z" fill="none" stroke="#30e030" stroke-width="1.2"/>
<path d="M618.3 459 L621.5 462.4 L618.3 465.8 L615 462.4 Z" fill="none" stroke="#1010e8" stroke-width="1.5"/>
<path d="M818.9 142 L822 145.7 L818.9 149.4 L815.8 145.7 Z" fill="none" stroke="#1010e8" stroke-width="1.5"/>
<path d="M724.5 294.5 L727.5 298 L724.5 301.5 L721.5 298 Z" fill="#1010e8"/>
<rect x="709.5" y="295.5" width="6" height="3.5" fill="none" stroke="#c8c8c8" stroke-width="1"/>
<rect x="596.5" y="599.5" width="133" height="32.7" fill="none" stroke="#e09448" stroke-width="1.8"/>
<path d="M596.4 595 L599 598.6 L596.4 602 L593.8 598.6 Z" fill="#3030f0"/>
<circle cx="798.7" cy="147.4" r="9.3" fill="none" stroke="#d82020" stroke-width="1"/>
<path d="M794.6 139 L802.9 139 L800.5 147.4 L803.5 157 L794 157 L797 147.4 Z" fill="#ff1010"/>
<g fill="#a0a0a0" stroke="#c4c4c4" stroke-width="1">
<path d="M596.6 618.5 L599.5 622 L604 620.5 L604.5 625 L608 628 L604.8 631.5 L606 636 L601.5 636.5 L599 640.5 L595.5 637.5 L591 639 L590.5 634.5 L586 632 L588.8 628.5 L587 624 L591.5 623 Z"/>
<path d="M728.2 619 L731.2 622.5 L735.5 621 L736 625.5 L739 629 L736 632.5 L737 637 L732.5 637.5 L730 641.5 L726.5 638.5 L722 640 L721.5 635.5 L717.5 633 L720 629.5 L718.5 625 L723 624 Z"/>
</g>
<g fill="#303030"><rect x="594" y="625" width="1" height="1"/><rect x="599" y="627" width="1" height="1"/><rect x="593" y="632" width="1" height="1"/><rect x="600" y="633" width="1" height="1"/><rect x="726" y="626" width="1" height="1"/><rect x="731" y="628" width="1" height="1"/><rect x="725" y="633" width="1" height="1"/><rect x="732" y="634" width="1" height="1"/></g>
<path d="M640.5 617.6 L642.5 613 L645 612.2 L646.5 614.5 L648.6 617 Z" fill="#b0b0b0"/>
<path d="M670.5 621.5 L673.8 628 L667.3 628 Z" fill="none" stroke="#20a0a0" stroke-width="1.2"/>
</g>

</svg><div class="a" style="left:224px;top:82px;width:265px;height:1px;background:#fff"></div><!--MAPEND-->

</body></html>
